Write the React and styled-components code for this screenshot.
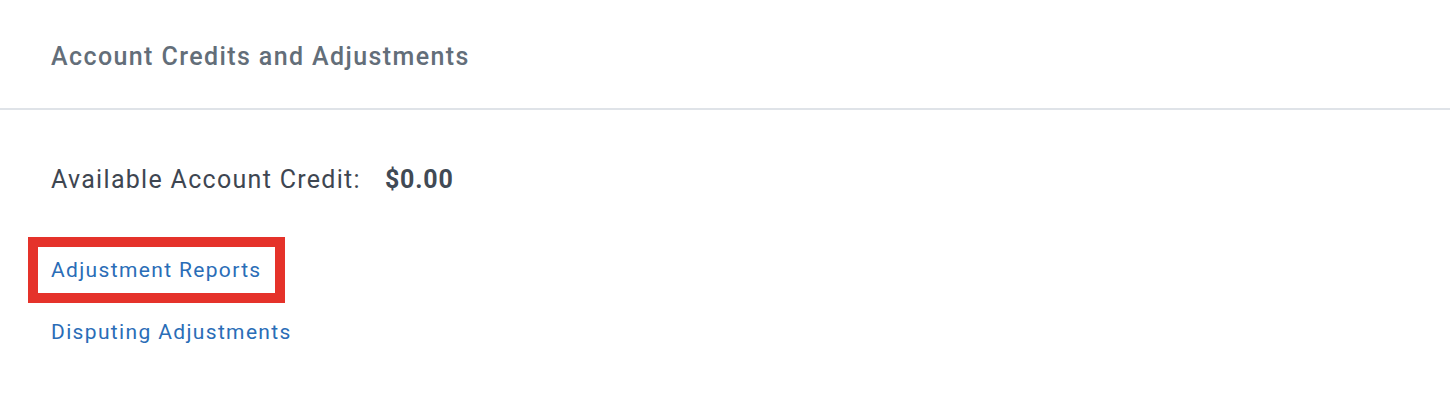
import React from "react";
import styled, { createGlobalStyle } from "styled-components";

const GlobalStyle = createGlobalStyle`
  body {
    margin: 0;
    background: #fff;
    font-family: Roboto, "Liberation Sans", Arial, sans-serif;
  }
`;

const Panel = styled.div`
  width: 1450px;
  height: 410px;
  background: #fff;
`;

const Header = styled.div`
  height: 110px;
  box-sizing: border-box;
  display: flex;
  align-items: center;
  padding: 4px 51px 0;
  border-bottom: 2px solid #dfe3e8;
`;

const Title = styled.h2`
  margin: 0;
  font-size: 25px;
  font-weight: 500;
  letter-spacing: 1.4px;
  color: #636e79;
`;

const Body = styled.div`
  padding: 52px 51px 0;
  display: flex;
  flex-direction: column;
`;

const CreditRow = styled.div`
  display: flex;
  align-items: baseline;
  gap: 24px;
  font-size: 25px;
  letter-spacing: 1.3px;
  line-height: 36px;
  color: #3e4651;
`;

const Amount = styled.span`
  font-weight: 700;
  letter-spacing: 0.8px;
  color: #414a55;
`;

const Links = styled.div`
  display: flex;
  flex-direction: column;
  gap: 38px;
  margin-top: 60px;
  align-items: flex-start;
`;

const LinkItem = styled.a`
  font-size: 21px;
  line-height: 24px;
  letter-spacing: 1.35px;
  color: #2a6db7;
  text-decoration: none;
  padding: 0 2px;
  margin: 0 -2px;
  outline: ${({ $highlight }) => ($highlight ? "10px solid #e5322a" : "none")};
  outline-offset: 11px;
`;

export default function App() {
  return (
    <Panel>
      <GlobalStyle />
      <Header>
        <Title>Account Credits and Adjustments</Title>
      </Header>
      <Body>
        <CreditRow>
          <span>Available Account Credit:</span>
          <Amount>$0.00</Amount>
        </CreditRow>
        <Links>
          <LinkItem href="#" $highlight>Adjustment Reports</LinkItem>
          <LinkItem href="#">Disputing Adjustments</LinkItem>
        </Links>
      </Body>
    </Panel>
  );
}
